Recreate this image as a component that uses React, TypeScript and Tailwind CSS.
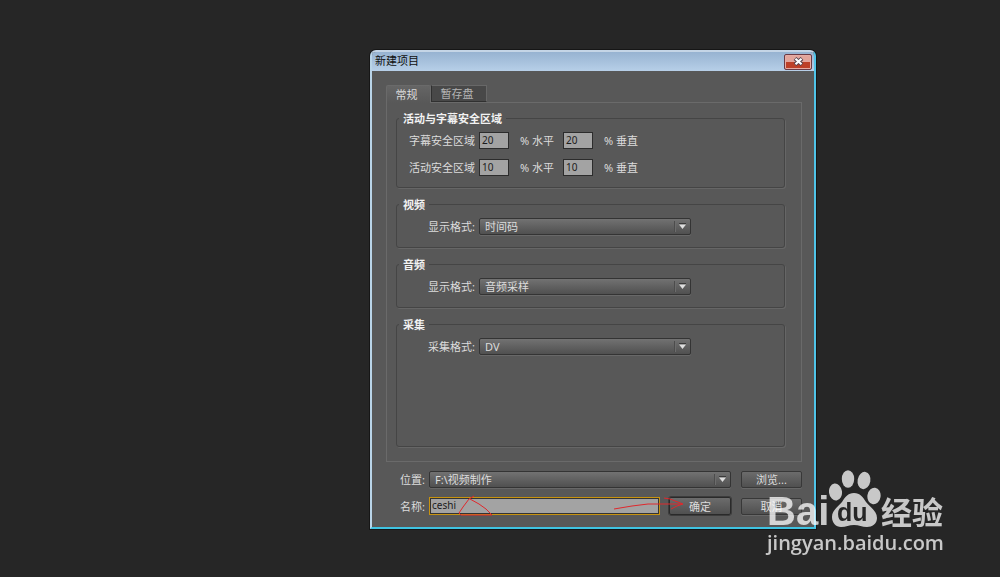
import { useState } from 'react';
import type { ReactNode } from 'react';

const selectStyle =
  'h-full w-full appearance-none rounded-[2px] border border-[#343434] bg-linear-to-b from-[#727272] to-[#505050] pl-[5px] pr-5 text-[11px] leading-[15px] text-[#dcdcdc] shadow-[0_1px_0_#686868] outline-none';

const buttonStyle =
  'flex shrink-0 items-center justify-center rounded-[2px] border bg-linear-to-b from-[#6c6c6c] to-[#505050] leading-none text-[#dcdcdc] shadow-[0_1px_0_#686868]';

function Select({ id, options, className = '' }: { id: string; options: string[]; className?: string }) {
  return (
    <div className={`relative h-[17px] ${className}`}>
      <select id={id} className={selectStyle}>
        {options.map((o) => (
          <option key={o}>{o}</option>
        ))}
      </select>
      <svg className="pointer-events-none absolute top-0 right-0" width="18" height="17" viewBox="0 0 18 17">
        <path d="M1.5 3v11" stroke="#4c4c4c" />
        <path d="M2.5 3v11" stroke="#6c6c6c" />
        <path d="M6 5.5h7" stroke="#3a3a3a" />
        <path d="M6 6.5h7l-3.5 4.5z" fill="#dedede" />
      </svg>
    </div>
  );
}

function Group({ title, className = '', children }: { title: string; className?: string; children: ReactNode }) {
  return (
    <fieldset className={`min-w-0 rounded-[3px] border border-[#454545] shadow-[1px_1px_0_#666] ${className}`}>
      <legend className="ml-[2px] h-[13px] bg-[#585858] px-1 font-bold leading-[14px] text-[#f2f2f2]">{title}</legend>
      <div className="pt-[7px]">{children}</div>
    </fieldset>
  );
}

function FormatRow({ id, label, options }: { id: string; label: string; options: string[] }) {
  return (
    <div className="flex h-[17px] items-center gap-1">
      <label htmlFor={id} className="w-[78px] text-right">{label}</label>
      <Select id={id} options={options} className="w-[212px]" />
    </div>
  );
}

function SafeAreaRow({ label, value }: { label: string; value: string }) {
  const inputStyle =
    'h-[17px] w-[30px] border border-[#2c2c2c] bg-[#a3a3a3] pb-[2px] pl-[2px] text-[10px] leading-none text-[#1c1c1c] outline-none';
  return (
    <div className="flex h-[17px] items-center">
      <span className="w-[78px] text-right">{label}</span>
      <input aria-label={`${label}水平`} defaultValue={value} className={`ml-1 ${inputStyle}`} />
      <span className="ml-[11px] w-[43px]">% 水平</span>
      <input aria-label={`${label}垂直`} defaultValue={value} className={inputStyle} />
      <span className="ml-[11px]">% 垂直</span>
    </div>
  );
}

function Watermark() {
  return (
    <div className="pointer-events-none absolute right-[54px] bottom-[21px] w-[179px] text-white opacity-75">
      <div className="flex h-[60px] items-end">
        <span className="w-[62px] font-['Liberation_Sans',sans-serif] text-[40px] font-bold leading-[38px]">Bai</span>
        <svg width="52" height="60" viewBox="0 0 52 60" className="shrink-0">
          <defs>
            <mask id="du">
              <rect width="52" height="60" fill="#fff" />
              <text x="8" y="51" fontSize="25" fontWeight="bold" fontFamily="Liberation Sans, sans-serif" fill="#000">du</text>
            </mask>
          </defs>
          <g fill="currentColor">
            <ellipse cx="6.5" cy="22" rx="6.5" ry="8.5" transform="rotate(-8 6.5 22)" />
            <ellipse cx="19" cy="9" rx="6.2" ry="8.7" />
            <ellipse cx="35" cy="10.5" rx="6.4" ry="8.7" transform="rotate(10 35 10.5)" />
            <ellipse cx="45" cy="26" rx="6.6" ry="8.3" transform="rotate(8 45 26)" />
            <path
              mask="url(#du)"
              d="M25 23c6 0 9 4 12 9 4 5 11 9 11 16 0 6-5 9-10 9-5 0-8-2-13-2s-8 2-13 2c-5 0-9-4-9-10 0-7 6-10 10-15 3-5 6-9 12-9z"
            />
          </g>
        </svg>
        <span className="font-['Noto_Sans_CJK_SC',sans-serif] text-[31px] font-bold leading-[38px]">经验</span>
      </div>
      <div className="font-['Open_Sans','Noto_Sans',sans-serif] text-[20px] leading-[26px] font-semibold">jingyan.baidu.com</div>
    </div>
  );
}

export default function App() {
  const [name, setName] = useState('ceshi');

  return (
    <main className="relative min-h-screen bg-[#262626] pt-[50px] pl-[37%] font-['Noto_Sans','Noto_Sans_CJK_SC',sans-serif] text-[11px] leading-[15px] text-[#dcdcdc]">
      <section
        role="dialog"
        aria-labelledby="dialog-title"
        className="w-full max-w-[446px] rounded-t-[6px] border-2 border-t-[#c5d5e6] border-r-[#4fc4e8] border-b-[#3fc3e2] border-l-[#b9d4e8] bg-[#585858] shadow-[0_0_0_1px_#161616]"
      >
        <header className="flex h-[19px] items-center justify-between rounded-t-[4px] bg-linear-to-b from-[#97b3d1] to-[#b7cfe8] pr-[2px] pl-[3px]">
          <h1 id="dialog-title" className="h-[17px] text-[#101010]">新建项目</h1>
          <button
            type="button"
            aria-label="关闭"
            className="flex h-4 w-7 items-center justify-center rounded-[2px] border border-[#6b3a44] bg-linear-to-b from-[#e3a59b] from-50% to-[#bd4028] to-50% shadow-[inset_0_0_0_1px_#e6aca4]"
          >
            <svg width="11" height="9" viewBox="0 0 11 9">
              <path d="M2 1.5l7 6M9 1.5l-7 6" stroke="#55434e" strokeWidth="4" />
              <path d="M2.5 1.8l6 5.4M8.5 1.8l-6 5.4" stroke="#fff" strokeWidth="2.2" />
            </svg>
          </button>
        </header>

        <div className="pt-[14px] pr-3 pb-3 pl-[14px]">
          <div role="tablist" className="flex h-[17px] items-stretch">
            <button
              type="button"
              role="tab"
              aria-selected="true"
              className="relative -mb-px w-[45px] rounded-t-[2px] border border-b-0 border-[#6a6a6a] bg-linear-to-b from-[#656565] to-[#585858] pr-1"
            >
              常规
            </button>
            <button
              type="button"
              role="tab"
              aria-selected="false"
              className="w-14 border border-[#686868] border-b-[#303030] border-l-[#303030] bg-[#484848] pr-1 text-[#b4b4b4]"
            >
              暂存盘
            </button>
          </div>

          <div role="tabpanel" className="flex flex-col gap-[10px] border border-[#6a6a6a] pt-[9px] pr-4 pb-[14px] pl-[9px]">
            <Group title="活动与字幕安全区域" className="h-[76px]">
              <div className="flex flex-col gap-[10px]">
                <SafeAreaRow label="字幕安全区域" value="20" />
                <SafeAreaRow label="活动安全区域" value="10" />
              </div>
            </Group>
            <Group title="视频" className="h-[50px]">
              <FormatRow id="video-format" label="显示格式:" options={['时间码', '英尺 + 帧', '画框']} />
            </Group>
            <Group title="音频" className="h-[50px]">
              <FormatRow id="audio-format" label="显示格式:" options={['音频采样', '毫秒']} />
            </Group>
            <Group title="采集" className="h-[129px]">
              <FormatRow id="capture-format" label="采集格式:" options={['DV', 'HDV']} />
            </Group>
          </div>

          <div className="mt-[9px] flex h-[17px] items-center">
            <label htmlFor="location" className="w-[39px] text-right">位置:</label>
            <Select id="location" options={['F:\\视频制作']} className="ml-1 flex-1" />
            <button type="button" className={`ml-[10px] h-[17px] w-[61px] border-[#383838] ${buttonStyle}`}>浏览...</button>
          </div>

          <div className="relative mt-[9px] flex h-[18px] items-center">
            <label htmlFor="name" className="w-[39px] text-right">名称:</label>
            <div className="ml-1 flex h-[18px] min-w-0 flex-1 bg-[#c8930f] p-px">
              <input
                id="name"
                value={name}
                onChange={(e) => setName(e.target.value)}
                className="w-full border border-[#333] bg-[#a3a3a3] pb-[2px] pl-px text-[10px] leading-none text-[#1c1c1c] outline-none"
              />
            </div>
            <button type="button" className={`ml-[9px] h-[18px] w-[62px] border-[#2a2a2a] outline-1 outline-[#3c3c3c] ${buttonStyle}`}>确定</button>
            <button type="button" className={`ml-[10px] h-[17px] w-[61px] border-[#383838] ${buttonStyle}`}>取消</button>

            {/* red pen marks pointing at the name box and the OK button */}
            <svg
              className="pointer-events-none absolute top-[-4px] left-0"
              width="320"
              height="26"
              viewBox="0 0 320 26"
              fill="none"
              stroke="#e0282c"
              strokeLinejoin="round"
            >
              <path d="M88 3l-5 3-6 8-4 6 2 2h31l-6-6-7-5-9-5" />
              <path d="M228 16l18-3 16-2h34M278 5l6 1 13 5-6 2-6 3" />
            </svg>
          </div>
        </div>
      </section>
      <Watermark />
    </main>
  );
}
